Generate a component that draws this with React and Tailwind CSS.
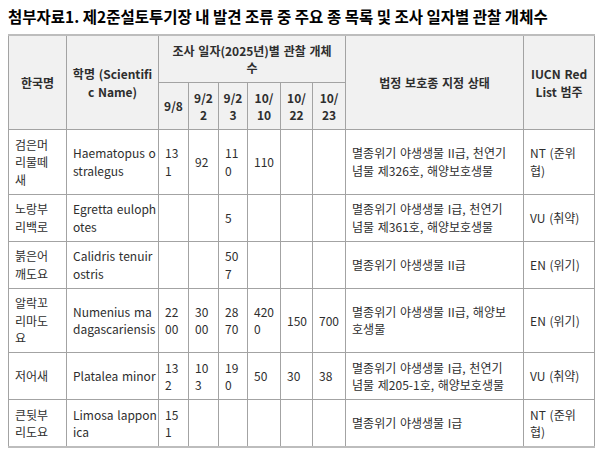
const rows = [
  {
    ko: ['검은머', '리물떼', '새'],
    sci: ['Haematopus o', 'stralegus'],
    counts: [['13', '1'], ['92'], ['11', '0'], ['110'], [], []],
    law: ['멸종위기 야생생물 II급, 천연기', '념물 제326호, 해양보호생물'],
    iucn: ['NT (준위', '협)'],
  },
  {
    ko: ['노랑부', '리백로'],
    sci: ['Egretta euloph', 'otes'],
    counts: [[], [], ['5'], [], [], []],
    law: ['멸종위기 야생생물 I급, 천연기', '념물 제361호, 해양보호생물'],
    iucn: ['VU (취약)'],
  },
  {
    ko: ['붉은어', '깨도요'],
    sci: ['Calidris tenuir', 'ostris'],
    counts: [[], [], ['50', '7'], [], [], []],
    law: ['멸종위기 야생생물 II급'],
    iucn: ['EN (위기)'],
  },
  {
    ko: ['알락꼬', '리마도', '요'],
    sci: ['Numenius ma', 'dagascariensis'],
    counts: [['22', '00'], ['30', '00'], ['28', '70'], ['420', '0'], ['150'], ['700']],
    law: ['멸종위기 야생생물 II급, 해양보', '호생물'],
    iucn: ['EN (위기)'],
  },
  {
    ko: ['저어새'],
    sci: ['Platalea minor'],
    counts: [['13', '2'], ['10', '3'], ['19', '0'], ['50'], ['30'], ['38']],
    law: ['멸종위기 야생생물 I급, 천연기', '념물 제205-1호, 해양보호생물'],
    iucn: ['VU (취약)'],
  },
  {
    ko: ['큰뒷부', '리도요'],
    sci: ['Limosa lappon', 'ica'],
    counts: [['15', '1'], [], [], [], [], []],
    law: ['멸종위기 야생생물 I급'],
    iucn: ['NT (준위', '협)'],
  },
]

const dates = [['9/8'], ['9/2', '2'], ['9/2', '3'], ['10/', '10'], ['10/', '22'], ['10/', '23']]

// each entry is one visual line, as wrapped in the source document
function Lines({ lines }) {
  return lines.map((l, i) => (
    <span key={i} className="block whitespace-nowrap">
      {l}
    </span>
  ))
}

const th = 'border border-[#a3a3a3] bg-[#f1f1f1] px-[4px] py-[5.5px] text-center align-middle font-bold'
const td = 'border border-[#a3a3a3] px-[6px] py-[5.5px] text-left align-middle'

export default function App() {
  return (
    <div
      className="min-h-screen bg-white pl-2 pt-[6px] text-[#2e2e2e] text-[12px] leading-[17.5px] [word-spacing:1px]"
      style={{ fontFamily: '"Noto Sans CJK KR", "Noto Sans", sans-serif' }}
    >
      <h1 className="text-[15.5px] leading-[20px] font-bold text-black mb-[8px] whitespace-nowrap [word-spacing:0px]">
        첨부자료1. 제2준설토투기장 내 발견 조류 중 주요 종 목록 및 조사 일자별 관찰 개체수
      </h1>

      <table className="table-fixed border-collapse w-[586px] border-y-2 border-y-[#bdbdbd]">
        <colgroup>
          <col className="w-[58px]" />
          <col className="w-[92px]" />
          <col className="w-[30px]" />
          <col className="w-[30px]" />
          <col className="w-[29px]" />
          <col className="w-[33px]" />
          <col className="w-[32px]" />
          <col className="w-[33px]" />
          <col className="w-[178px]" />
          <col className="w-[71px]" />
        </colgroup>
        <thead>
          <tr>
            <th rowSpan={2} className={th}>한국명</th>
            <th rowSpan={2} className={th}>
              <Lines lines={['학명 (Scientifi', 'c Name)']} />
            </th>
            <th colSpan={6} className={th}>
              <Lines lines={['조사 일자(2025년)별 관찰 개체', '수']} />
            </th>
            <th rowSpan={2} className={th}>법정 보호종 지정 상태</th>
            <th rowSpan={2} className={th}>
              <Lines lines={['IUCN Red', 'List 범주']} />
            </th>
          </tr>
          <tr>
            {dates.map((d, i) => (
              <th key={i} className={th + ' px-0'}>
                <Lines lines={d} />
              </th>
            ))}
          </tr>
        </thead>
        <tbody>
          {rows.map((r, i) => (
            <tr key={i}>
              <td className={td}>
                <Lines lines={r.ko} />
              </td>
              <td className={td + ' pr-[2px]'}>
                <Lines lines={r.sci} />
              </td>
              {r.counts.map((c, j) => (
                <td key={j} className={td + ' px-[5px]'}>
                  <Lines lines={c} />
                </td>
              ))}
              <td className={td}>
                <Lines lines={r.law} />
              </td>
              <td className={td}>
                <Lines lines={r.iucn} />
              </td>
            </tr>
          ))}
        </tbody>
      </table>
    </div>
  )
}
